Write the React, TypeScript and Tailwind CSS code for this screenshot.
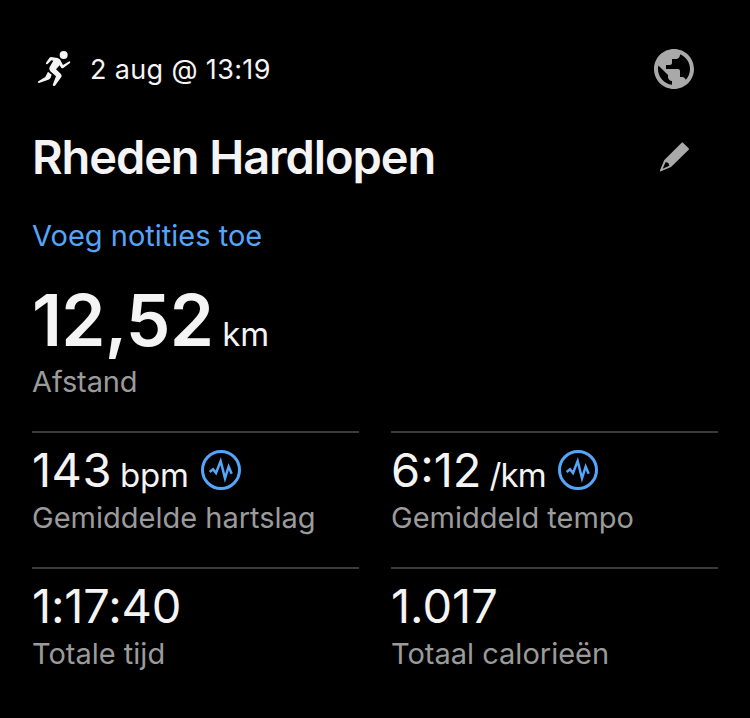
import type { ReactNode } from "react";

function RunnerIcon() {
  return (
    <svg viewBox="50 32 102 108" className="h-9 w-[34px]" fill="currentColor">
      <circle cx="130" cy="44" r="12" />
      <path d="M92 50 L112 53 Q121 56 123 65 L128 74 L147 63 Q152 63 149 68 L129 83 Q124 85 121 80 L118 75 L107 87 L121 100 Q126 105 123 110 L104 136 Q99 139 97 134 L107 108 L90 93 Q84 87 88 80 L99 61 L93 60 L82 71 Q75 73 77 67 L87 53 Q89 50 92 50Z" />
      <path d="M83 94 L94 103 L91 112 Q88 117 84 118 L56 128 Q50 127 54 123 L75 110Z" />
    </svg>
  );
}

function GlobeIcon() {
  return (
    <svg viewBox="2 2 20 20" className="size-10 text-[#a9a9a9]" fill="currentColor">
      <path d="M12 2C6.48 2 2 6.48 2 12s4.48 10 10 10 10-4.48 10-10S17.52 2 12 2zm-1 17.93c-3.95-.49-7-3.85-7-7.93 0-.62.08-1.21.21-1.79L9 15v1c0 1.1.9 2 2 2v1.93zm6.9-2.54c-.26-.81-1-1.39-1.9-1.39h-1v-3c0-.55-.45-1-1-1H8v-2h2c.55 0 1-.45 1-1V7h2c1.1 0 2-.9 2-2v-.41c2.93 1.19 5 4.06 5 7.41 0 2.08-.8 3.97-2.1 5.39z" />
    </svg>
  );
}

function PencilIcon() {
  return (
    <svg viewBox="30 37 90 90" className="size-[30px]" fill="currentColor">
      <path
        fillRule="evenodd"
        d="M95 39 Q97 37 99 39 L116 56 Q118 58 116 60 L63 112 L33 125 Q29 126 30 122 L43 91Z M47 97 L38 117 L58 108 L55 100Z"
      />
    </svg>
  );
}

function PulseIcon() {
  return (
    <svg viewBox="0 0 120 120" className="ml-3 size-10 self-center text-[#53a6fa]" fill="none" stroke="currentColor">
      <circle cx="60" cy="60" r="55.5" strokeWidth="9" />
      <path d="M26 66 L36 58 L45 69 L59 33 L72 85 L83 50 L92 71" strokeWidth="7.5" />
    </svg>
  );
}

type StatProps = {
  label: string;
  children: ReactNode;
};

function Stat({ label, children }: StatProps) {
  return (
    <div className="h-[136px] border-t-2 border-[#3b3b3b] pt-[9px]">
      <div className="flex h-14 items-baseline text-[47px] leading-[56px]">{children}</div>
      <p className="mt-px text-[29px] leading-[38px] text-[#9b9b9b]">{label}</p>
    </div>
  );
}

export default function App() {
  return (
    <main className="h-[718px] w-[750px] overflow-hidden bg-black px-8 pt-[49px] font-['Inter',sans-serif] whitespace-nowrap text-[#f4f4f4]">
      <header className="flex h-10 items-center justify-between pr-6 pl-[5px]">
        <div className="flex items-center">
          <RunnerIcon />
          <span className="ml-[19px] pt-0.5 text-[27px] leading-10 tracking-[0.35px]">2 aug @ 13:19</span>
        </div>
        <GlobeIcon />
      </header>

      <div className="mt-[38px] flex h-[60px] items-center justify-between pr-7">
        <h1 className="text-[47px] leading-[60px] font-semibold tracking-[-1.1px]">Rheden Hardlopen</h1>
        <button className="text-[#a9a9a9]">
          <PencilIcon />
        </button>
      </div>

      <button className="mt-[31px] block text-[29px] leading-9 text-[#53a6fa]">Voeg notities toe</button>

      <div className="mt-[26px] flex h-20 items-baseline leading-[80px]">
        <span className="text-[71px] font-semibold tracking-[-0.8px]">12,52</span>
        <span className="ml-[9px] text-[33px]">km</span>
      </div>
      <p className="mt-[3px] text-[29px] leading-[38px] tracking-[-0.1px] text-[#9b9b9b]">Afstand</p>

      <section className="mt-[30px] grid grid-cols-2 gap-x-8">
        <Stat label="Gemiddelde hartslag">
          <span className="tracking-[0.5px]">143</span>
          <span className="ml-2 text-[33px] tracking-[-0.2px]">bpm</span>
          <PulseIcon />
        </Stat>
        <Stat label="Gemiddeld tempo">
          <span>6:12</span>
          <span className="ml-2 text-[33px] tracking-[-0.8px]">/km</span>
          <PulseIcon />
        </Stat>
        <Stat label="Totale tijd">
          <span className="tracking-[-0.15px]">1:17:40</span>
        </Stat>
        <Stat label="Totaal calorieën">1.017</Stat>
      </section>
    </main>
  );
}
